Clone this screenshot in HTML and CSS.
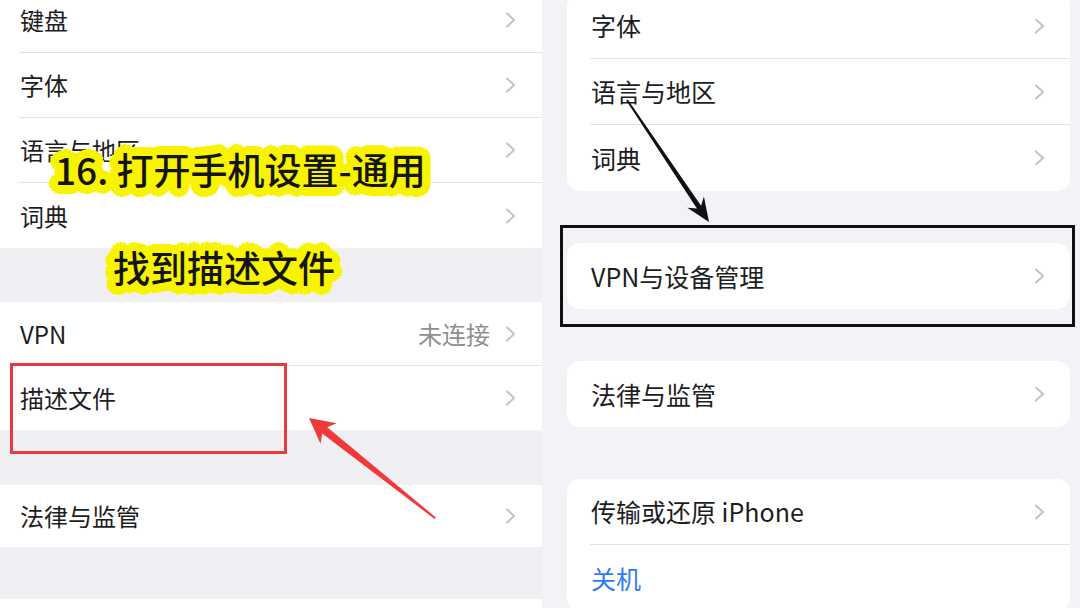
FILE: index.html
```html
<!DOCTYPE html>
<html lang="zh-CN">
<head>
<meta charset="utf-8">
<title>通用设置</title>
<link rel="stylesheet" href="styles.css">
</head>
<body>
<div class="screen">
  <section class="panel-left">
    <div class="group-plain group-first">
      <div class="row"><div class="row-body"><span class="label">键盘</span><svg class="chev" viewBox="0 0 11 16"><polyline points="2,1.5 9,8 2,14.5"/></svg></div></div>
      <div class="row"><div class="row-body"><span class="label">字体</span><svg class="chev" viewBox="0 0 11 16"><polyline points="2,1.5 9,8 2,14.5"/></svg></div></div>
      <div class="row"><div class="row-body"><span class="label">语言与地区</span><svg class="chev" viewBox="0 0 11 16"><polyline points="2,1.5 9,8 2,14.5"/></svg></div></div>
      <div class="row"><div class="row-body last"><span class="label">词典</span><svg class="chev" viewBox="0 0 11 16"><polyline points="2,1.5 9,8 2,14.5"/></svg></div></div>
    </div>
    <div class="group-plain gap-a">
      <div class="row short"><div class="row-body"><span class="label">VPN</span><span class="value">未连接</span><svg class="chev" viewBox="0 0 11 16"><polyline points="2,1.5 9,8 2,14.5"/></svg></div></div>
      <div class="row short"><div class="row-body last"><span class="label">描述文件</span><svg class="chev" viewBox="0 0 11 16"><polyline points="2,1.5 9,8 2,14.5"/></svg></div></div>
    </div>
    <div class="group-plain gap-b">
      <div class="row shorter"><div class="row-body last"><span class="label">法律与监管</span><svg class="chev" viewBox="0 0 11 16"><polyline points="2,1.5 9,8 2,14.5"/></svg></div></div>
    </div>
    <div class="group-plain gap-c">
      <div class="row"><div class="row-body last"></div></div>
    </div>

    <div class="caption caption-1">16. 打开手机设置-通用</div>
    <div class="caption caption-2">找到描述文件</div>
    <div class="mark-red"></div>
    <svg class="arrow-red" viewBox="0 0 542 608" aria-hidden="true">
      <polygon points="309,418 336.7,423.3 327.2,427.3 435.8,517.4 434.6,519 322.2,433.5 320.5,443.7"/>
    </svg>
  </section>

  <section class="panel-right">
    <div class="card card-first">
      <div class="row-r"><div class="row-body"><span class="label">字体</span><svg class="chev" viewBox="0 0 11 16"><polyline points="2,1.5 9,8 2,14.5"/></svg></div></div>
      <div class="row-r"><div class="row-body"><span class="label">语言与地区</span><svg class="chev" viewBox="0 0 11 16"><polyline points="2,1.5 9,8 2,14.5"/></svg></div></div>
      <div class="row-r"><div class="row-body last"><span class="label">词典</span><svg class="chev" viewBox="0 0 11 16"><polyline points="2,1.5 9,8 2,14.5"/></svg></div></div>
    </div>
    <div class="card">
      <div class="row-r"><div class="row-body last"><span class="label">VPN与设备管理</span><svg class="chev" viewBox="0 0 11 16"><polyline points="2,1.5 9,8 2,14.5"/></svg></div></div>
    </div>
    <div class="card">
      <div class="row-r"><div class="row-body last"><span class="label">法律与监管</span><svg class="chev" viewBox="0 0 11 16"><polyline points="2,1.5 9,8 2,14.5"/></svg></div></div>
    </div>
    <div class="card">
      <div class="row-r"><div class="row-body"><span class="label">传输或还原 iPhone</span><svg class="chev" viewBox="0 0 11 16"><polyline points="2,1.5 9,8 2,14.5"/></svg></div></div>
      <div class="row-r"><div class="row-body last"><span class="label link">关机</span></div></div>
    </div>

    <div class="mark-black"></div>
    <svg class="arrow-black" viewBox="542 0 538 608" aria-hidden="true">
      <polygon points="709,222 703.9,196.5 701.1,205.7 627.8,99.4 626.2,100.6 696.9,208.5 687.3,207.7"/>
    </svg>
  </section>
</div>
</body>
</html>
```

FILE: styles.css
```css
* { box-sizing: border-box; }

html, body {
  margin: 0;
  padding: 0;
  width: 1080px;
  height: 608px;
  overflow: hidden;
  background: #f2f2f7;
  font-family: "Noto Sans CJK SC", "Noto Sans", sans-serif;
  color: #1d1d1f;
}

.screen {
  display: flex;
  width: 1080px;
  height: 608px;
}

/* ---------- left: plain grouped list ---------- */
.panel-left {
  position: relative;
  width: 542px;
  height: 608px;
  background: #f0f0f4;
  overflow: hidden;
}

.group-plain {
  background: #ffffff;
}
.group-first { margin-top: -12px; }
.gap-a { margin-top: 54px; }
.gap-b { margin-top: 55px; }
.gap-c { margin-top: 52px; }

.row {
  height: 65px;
  padding-left: 19px;
  display: flex;
}
.row.short { height: 64px; }
.row.shorter { height: 62px; }

.row-body {
  flex: 1;
  display: flex;
  align-items: center;
  padding-left: 1px;
  padding-right: 26px;
  border-bottom: 1px solid #e3e3e7;
}
.row-body.last { border-bottom: none; }

.label {
  font-size: 24px;
  line-height: 1;
  flex: 1;
  white-space: nowrap;
}

.value {
  font-size: 24px;
  line-height: 1;
  color: #8e8e93;
  margin-right: 15px;
}

.chev {
  width: 11px;
  height: 16px;
  flex: none;
}
.chev polyline {
  fill: none;
  stroke: #c3c3c8;
  stroke-width: 2.1;
  stroke-linecap: round;
  stroke-linejoin: round;
}

/* ---------- right: inset grouped list ---------- */
.panel-right {
  position: relative;
  flex: 1;
  height: 608px;
  background: #f2f2f7;
  padding: 0 10px 0 25px;
  display: flex;
  flex-direction: column;
  gap: 52px;
  overflow: hidden;
}

.card {
  background: #ffffff;
  border-radius: 13px;
  padding-left: 23px;
  flex: none;
}
.card-first { margin-top: -7px; }

.row-r {
  height: 66px;
  display: flex;
}
.row-r .row-body {
  padding-left: 1px;
  padding-right: 25px;
}
.row-r .label { font-size: 25px; }

.link { color: #2f7bf5; }

/* ---------- annotations (overlays) ---------- */
.caption {
  position: absolute;
  font-family: "Noto Sans CJK SC", "Noto Sans", sans-serif;
  font-weight: 500;
  font-size: 37px;
  line-height: 37px;
  color: #141414;
  white-space: nowrap;
  text-shadow:
    9px 0 0 #f8f400, -9px 0 0 #f8f400, 0 9px 0 #f8f400, 0 -9px 0 #f8f400,
    6.4px 6.4px 0 #f8f400, -6.4px 6.4px 0 #f8f400, 6.4px -6.4px 0 #f8f400, -6.4px -6.4px 0 #f8f400,
    8.3px 3.4px 0 #f8f400, -8.3px 3.4px 0 #f8f400, 8.3px -3.4px 0 #f8f400, -8.3px -3.4px 0 #f8f400,
    3.4px 8.3px 0 #f8f400, -3.4px 8.3px 0 #f8f400, 3.4px -8.3px 0 #f8f400, -3.4px -8.3px 0 #f8f400,
    5px 0 0 #f8f400, -5px 0 0 #f8f400, 0 5px 0 #f8f400, 0 -5px 0 #f8f400,
    3.5px 3.5px 0 #f8f400, -3.5px 3.5px 0 #f8f400, 3.5px -3.5px 0 #f8f400, -3.5px -3.5px 0 #f8f400,
    0 0 3px #f8f400;
}
.caption-1 { left: 55px; top: 151px; }
.caption-2 { left: 113px; top: 249px; }

.mark-red {
  position: absolute;
  left: 10px;
  top: 363px;
  width: 277px;
  height: 91px;
  border: 3px solid #e8393c;
}

.arrow-red {
  position: absolute;
  left: 0;
  top: 0;
  width: 542px;
  height: 608px;
}
.arrow-red polygon { fill: #f03a3a; }

.mark-black {
  position: absolute;
  left: 18px;
  top: 225px;
  width: 515px;
  height: 102px;
  border: 3px solid #111111;
}

.arrow-black {
  position: absolute;
  left: 0;
  top: 0;
  width: 538px;
  height: 608px;
}
.arrow-black polygon { fill: #111111; }
```
